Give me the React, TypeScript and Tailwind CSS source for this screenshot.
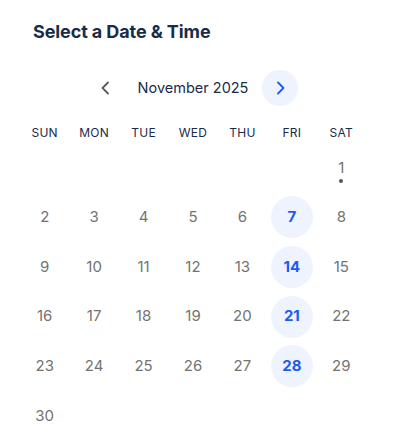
import React from "react";

const Chevron = ({ dir, color }: { dir: "left" | "right"; color: string }) => (
  <svg width="16" height="16" viewBox="0 0 16 16" fill="none">
    <path
      d={dir === "left" ? "M10 2.5L4.5 8L10 13.5" : "M6 2.5L11.5 8L6 13.5"}
      stroke={color}
      strokeWidth="1.8"
      strokeLinecap="round"
      strokeLinejoin="round"
    />
  </svg>
);

export default function App() {
  const days = ["SUN", "MON", "TUE", "WED", "THU", "FRI", "SAT"];
  const cells: (number | null)[] = [null, null, null, null, null, null];
  for (let i = 1; i <= 30; i++) cells.push(i);
  const selected = [7, 14, 21, 28];
  return (
    <div
      className="w-[400px] h-[436px] bg-white overflow-hidden"
      style={{ fontFamily: "Inter, 'Open Sans', sans-serif" }}
    >
      <h1 className="pl-[33px] pt-[19px] text-[18px] leading-[26px] font-bold text-[#1a2b4a] tracking-[-0.1px]">
        Select a Date &amp; Time
      </h1>
      <div className="ml-[20px] w-[346px]">
        <div className="mt-[25px] flex items-center justify-center gap-[14px]">
          <button className="w-[36px] h-[36px] rounded-full flex items-center justify-center">
            <Chevron dir="left" color="#5a5a5a" />
          </button>
          <div className="text-[14.5px] text-[#1a2b4a] whitespace-nowrap text-center">November 2025</div>
          <button className="w-[36px] h-[36px] rounded-full bg-[#eef3fe] flex items-center justify-center">
            <Chevron dir="right" color="#1a5cf0" />
          </button>
        </div>
        <div className="mt-[17px] grid grid-cols-7 h-[20px] items-center">
          {days.map((d) => (
            <div key={d} className="text-center text-[12px] text-[#1a2b4a] tracking-[0.2px]">
              {d}
            </div>
          ))}
        </div>
        <div className="grid grid-cols-7">
          {cells.map((c, i) => (
            <div key={i} className="h-[49.6px] flex items-center justify-center relative">
              {c !== null &&
                (selected.includes(c) ? (
                  <div className="w-[42px] h-[42px] rounded-full bg-[#eef3fe] flex items-center justify-center text-[15px] font-bold text-[#1a5cf0]">
                    {c}
                  </div>
                ) : (
                  <div className="text-[15px] text-[#737373]">{c}</div>
                ))}
              {c === 1 && (
                <div className="absolute left-1/2 top-[36px] -translate-x-1/2 w-[4px] h-[4px] rounded-full bg-[#555]" />
              )}
            </div>
          ))}
        </div>
      </div>
    </div>
  );
}
